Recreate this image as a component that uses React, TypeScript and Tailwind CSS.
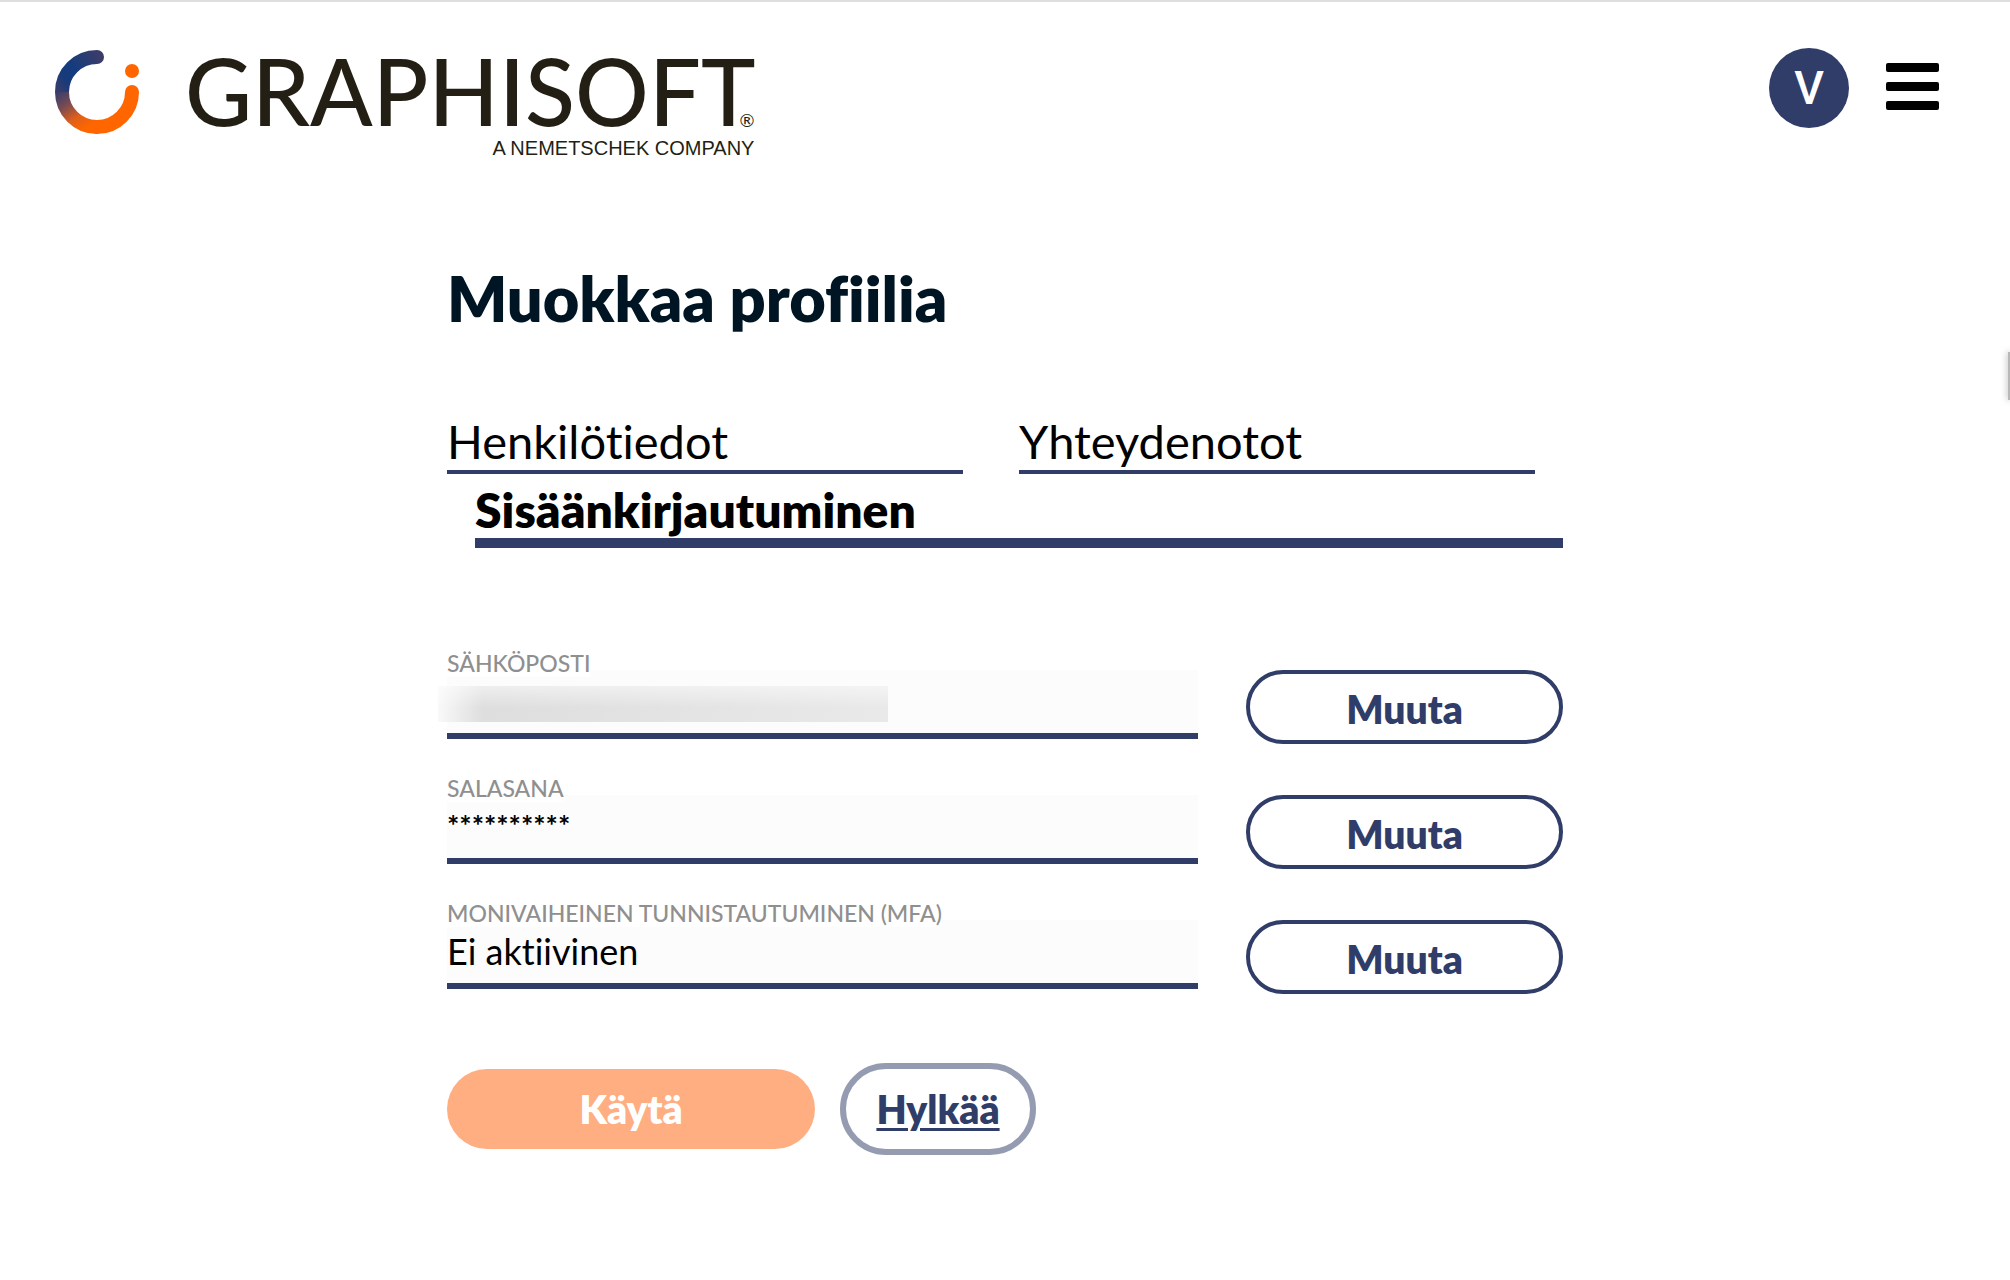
interface ProfileField {
  id: string;
  label: string;
  value: string;
  hidden?: boolean;
}

const fields: ProfileField[] = [
  { id: 'email', label: 'SÄHKÖPOSTI', value: '', hidden: true },
  { id: 'password', label: 'SALASANA', value: '**********' },
  { id: 'mfa', label: 'MONIVAIHEINEN TUNNISTAUTUMINEN (MFA)', value: 'Ei aktiivinen' },
];

function LogoMark() {
  return (
    <svg viewBox="0 0 84 84" className="mt-0.5 size-[84px] shrink-0" fill="none" aria-hidden="true">
      <defs>
        <linearGradient id="arcTop" gradientUnits="userSpaceOnUse" x1="49" y1="8" x2="6" y2="42">
          <stop offset="0" stopColor="#3d3c69" />
          <stop offset="0.55" stopColor="#143c7e" />
          <stop offset="0.8" stopColor="#173b7b" />
          <stop offset="1" stopColor="#353c6c" />
        </linearGradient>
        <linearGradient id="arcBottom" gradientUnits="userSpaceOnUse" x1="5" y1="38" x2="32" y2="78">
          <stop offset="0" stopColor="#2f3c70" />
          <stop offset="0.35" stopColor="#744a55" />
          <stop offset="0.7" stopColor="#e05f1a" />
          <stop offset="1" stopColor="#ff6600" />
        </linearGradient>
      </defs>
      <path d="M42 77A35 35 0 0 0 77 42" stroke="#ff6600" strokeWidth="14" strokeLinecap="round" />
      <path d="M7 42A35 35 0 0 0 42 77" stroke="url(#arcBottom)" strokeWidth="14" />
      <path d="M42 7A35 35 0 0 0 7 42" stroke="url(#arcTop)" strokeWidth="14" />
      <path d="M42 0a7 7 0 0 1 0 14z" fill="#3b3c6a" />
      <circle cx="77" cy="21" r="7" fill="#ff6600" />
    </svg>
  );
}

function Header() {
  return (
    <header className="flex items-start justify-between border-t-2 border-[#dedede] pt-[46px] pr-[71px] pl-[55px]">
      <a href="#" className="flex items-start gap-[46px] text-[#231f14]">
        <LogoMark />
        <span className="flex flex-col items-end">
          <span className="flex items-end">
            <span className="text-[92px] leading-[86px] font-medium">GRAPHISOFT</span>
            <span className="-ml-4 text-[18px] leading-7">®</span>
          </span>
          <span className="font-['Liberation_Sans',sans-serif] text-[20px] leading-7">A NEMETSCHEK COMPANY</span>
        </span>
      </a>

      <div className="flex items-center gap-[37px]">
        <button
          type="button"
          className="flex size-20 items-center justify-center rounded-full bg-[#303d69] font-['Roboto',sans-serif] text-[46px] leading-none font-medium text-white"
        >
          V
        </button>
        <button type="button" aria-label="Valikko" className="flex w-[53px] flex-col gap-2.5 pb-1">
          <span className="h-[9px] w-full rounded-xs bg-black" />
          <span className="h-[9px] w-full rounded-xs bg-black" />
          <span className="h-[9px] w-full rounded-xs bg-black" />
        </button>
      </div>
    </header>
  );
}

function Tabs() {
  return (
    <nav>
      <div className="flex gap-14 pr-7">
        <a href="#henkilotiedot" className="flex-1 border-b-4 border-[#303d69] text-[47px] leading-[58px]">
          Henkilötiedot
        </a>
        <a href="#yhteydenotot" className="flex-1 border-b-4 border-[#303d69] text-[47px] leading-[58px]">
          Yhteydenotot
        </a>
      </div>
      <a
        href="#sisaankirjautuminen"
        aria-current="page"
        className="mt-2 ml-7 block border-b-10 border-[#303d69] text-[48px] leading-[56px] font-extrabold"
      >
        Sisäänkirjautuminen
      </a>
    </nav>
  );
}

function FieldRow({ id, label, value, hidden }: ProfileField) {
  return (
    <div className="flex items-end gap-12">
      <div className="relative flex flex-1 flex-col items-start">
        <label htmlFor={id} className="z-10 -mb-[7px] bg-white text-[23px] leading-7 font-medium text-[#8f8f8f]">
          {label}
        </label>
        <input
          id={id}
          type="text"
          readOnly
          value={value}
          className={`h-[69px] w-full border-b-6 border-[#303d69] bg-[#fcfcfc] text-black outline-none ${
            id === 'password' ? 'pb-1 text-[29px] font-bold' : 'pb-0.5 text-[36px]'
          }`}
        />
        {/* Sähköpostiosoite peitetty */}
        {hidden && (
          <div className="absolute bottom-[17px] -left-[9px] h-9 w-[450px] bg-linear-to-r from-[#f9f9f9] via-[#dedede] via-10% to-[#e9e9e9]">
            <div className="h-full w-full bg-linear-to-b from-white/50 to-transparent to-60%" />
          </div>
        )}
      </div>
      <button
        type="button"
        className="-mb-[5px] h-[74px] w-[317px] rounded-[37px] border-4 border-[#303d69] pt-1 text-[39px] leading-none font-extrabold text-[#303d69]"
      >
        Muuta
      </button>
    </div>
  );
}

export default function App() {
  return (
    <div className="relative min-h-screen overflow-hidden bg-white font-['Lato',sans-serif] text-black [font-variant-ligatures:none]">
      <Header />

      <main className="mx-auto mt-[98px] max-w-[1116px]">
        <h1 className="text-[63px] leading-[76px] font-extrabold text-[#001524]">Muokkaa profiilia</h1>

        <div className="mt-[76px]">
          <Tabs />
        </div>

        <form className="mt-[101px]">
          <div className="flex flex-col gap-[35px]">
            {fields.map((field) => (
              <FieldRow key={field.id} {...field} />
            ))}
          </div>

          <div className="mt-[74px] flex items-center gap-[25px]">
            <button
              type="submit"
              disabled
              className="h-20 w-[368px] rounded-[40px] bg-[#ffae82] text-[39px] leading-none font-extrabold text-white"
            >
              Käytä
            </button>
            <button
              type="button"
              className="h-[92px] w-[196px] rounded-[46px] border-6 border-[#959bb0] text-[39px] leading-none font-extrabold text-[#303d69] underline decoration-3 underline-offset-4"
            >
              Hylkää
            </button>
          </div>
        </form>
      </main>

      {/* Sivun reunassa oleva kieleke */}
      <div className="absolute top-[352px] right-0 h-12 w-0.5 bg-[#b8b8b8] shadow-[0_0_6px_rgba(0,0,0,0.5)]" />
    </div>
  );
}
